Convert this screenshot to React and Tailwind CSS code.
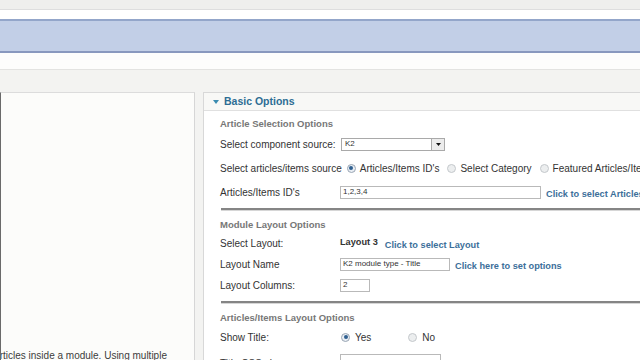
import React from 'react';

const Radio = ({ checked }) => (
    <span
        className={
            checked
                ? 'inline-flex h-[9px] w-[9px] shrink-0 items-center justify-center rounded-full border border-[#9aa6b4] bg-[#e9eef4]'
                : 'inline-flex h-[9px] w-[9px] shrink-0 rounded-full border border-[#c4c8cc] bg-[#eceeef]'
        }
    >
        {checked && <span className="h-[4px] w-[4px] rounded-full bg-[#2f5f8f]" />}
    </span>
);

const Label = ({ children }) => (
    <span className="w-[120px] shrink-0 text-[10px] text-[#333]">{children}</span>
);

const SectionTitle = ({ children, className }) => (
    <div className={'flex h-[14px] items-center text-[9.5px] font-bold text-[#777] ' + className}>
        {children}
    </div>
);

const Link = ({ children }) => (
    <span className="text-[9.2px] font-bold text-[#3c6f9a]">{children}</span>
);

const Input = ({ value, width }) => (
    <div
        className={
            'flex h-[13px] items-center border border-[#b9b9b9] bg-white pl-[2px] text-[8px] text-[#333] ' + width
        }
    >
        {value}
    </div>
);

const Separator = ({ className }) => (
    <div className={'ml-[17px] border-t-2 border-t-[#858585] border-b border-b-[#d6d6d6] ' + className} />
);

const App = () => {
    return (
        <div className="h-[360px] w-[640px] overflow-hidden bg-[#f3f3f1] font-['Liberation_Sans',Arial,sans-serif]">
            <div className="h-[10px] border-b border-[#dedede] bg-[#efefed]" />
            <div className="h-[9px] bg-white" />
            <div className="h-[34px] border-t-2 border-b-2 border-t-[#93a6ca] border-b-[#8898be] bg-[#c2cfe7]" />
            <div className="h-[17px] border-b border-[#e3e3e1] bg-[#fdfdfc]" />
            <div className="h-[22px]" />

            <div className="flex gap-[8px]">
                {/* left panel */}
                <div className="h-[268px] w-[195px] shrink-0 overflow-hidden border-t border-r border-l border-t-[#dcdcdc] border-r-[#d6d6d6] border-l-[#6a6a6a] bg-[#fcfcfa] pt-[256px]">
                    <p className="-ml-[8px] whitespace-nowrap text-[10px] leading-[14px] text-[#3c3c3c]">
                        Articles inside a module. Using multiple
                    </p>
                </div>

                {/* right panel */}
                <div className="h-[268px] flex-1 border-t border-l border-[#d8d8d8] bg-white">
                    <div className="flex h-[18px] items-center gap-[5px] border-b border-[#e0e0e0] bg-[#f8f8f6] pl-[9px]">
                        <svg width="6" height="4" viewBox="0 0 6 4">
                            <path d="M0 0 L6 0 L3 4 Z" fill="#3a8bb0" />
                        </svg>
                        <span className="text-[10.5px] font-bold text-[#2d6d94]">Basic Options</span>
                    </div>

                    <div className="flex flex-col">
                        <SectionTitle className="mt-[6px] pl-[16px]">Article Selection Options</SectionTitle>

                        <div className="mt-[6px] flex h-[14px] items-center pl-[16px]">
                            <Label>Select component source:</Label>
                            <div className="ml-px flex h-[13px] w-[104px] items-center justify-between border border-[#a9a9a9] bg-white pl-[3px] text-[8px] text-[#333]">
                                K2
                                <span className="flex h-[11px] w-[13px] items-center justify-center border-l border-[#a9a9a9] bg-[#ececec]">
                                    <svg width="5" height="3" viewBox="0 0 5 3">
                                        <path d="M0 0 L5 0 L2.5 3 Z" fill="#111" />
                                    </svg>
                                </span>
                            </div>
                        </div>

                        <div className="mt-[10px] flex h-[14px] items-center whitespace-nowrap pl-[16px] text-[10px] text-[#333]">
                            <span>Select articles/items source</span>
                            <span className="ml-[5px] flex items-center gap-[4px]">
                                <Radio checked />
                                Articles/Items ID's
                            </span>
                            <span className="ml-[8px] flex items-center gap-[4px]">
                                <Radio />
                                Select Category
                            </span>
                            <span className="ml-[8px] flex items-center gap-[4px]">
                                <Radio />
                                Featured Articles/Items
                            </span>
                        </div>

                        <div className="mt-[10px] flex h-[14px] items-center whitespace-nowrap pl-[16px]">
                            <Label>Articles/Items ID's</Label>
                            <Input value="1,2,3,4" width="w-[201px]" />
                            <span className="ml-[5px]">
                                <Link>Click to select Articles</Link>
                            </span>
                        </div>

                        <Separator className="mt-[9px]" />

                        <SectionTitle className="mt-[7px] pl-[16px]">Module Layout Options</SectionTitle>

                        <div className="mt-[4px] flex h-[14px] items-center pl-[16px]">
                            <Label>Select Layout:</Label>
                            <span className="text-[9.2px] font-bold text-[#333]">Layout 3</span>
                            <span className="ml-[7px]">
                                <Link>Click to select Layout</Link>
                            </span>
                        </div>

                        <div className="mt-[7px] flex h-[14px] items-center pl-[16px]">
                            <Label>Layout Name</Label>
                            <Input value="K2 module type - Title" width="w-[110px]" />
                            <span className="ml-[5px]">
                                <Link>Click here to set options</Link>
                            </span>
                        </div>

                        <div className="mt-[7px] flex h-[14px] items-center pl-[16px]">
                            <Label>Layout Columns:</Label>
                            <Input value="2" width="w-[30px]" />
                        </div>

                        <Separator className="mt-[9px]" />

                        <SectionTitle className="mt-[7px] pl-[16px]">Articles/Items Layout Options</SectionTitle>

                        <div className="mt-[5px] flex h-[14px] items-center pl-[16px] text-[10px] text-[#333]">
                            <Label>Show Title:</Label>
                            <span className="ml-px flex items-center gap-[5px]">
                                <Radio checked />
                                Yes
                            </span>
                            <span className="ml-[37px] flex items-center gap-[5px]">
                                <Radio />
                                No
                            </span>
                        </div>

                        <div className="mt-[10px] flex h-[14px] items-start pl-[16px]">
                            <span className="w-[120px] shrink-0 pt-[2px] text-[10px] text-[#333]">Title CSS class:</span>
                            <Input value="" width="w-[101px]" />
                        </div>
                    </div>
                </div>
            </div>
        </div>
    );
};

export default App;
